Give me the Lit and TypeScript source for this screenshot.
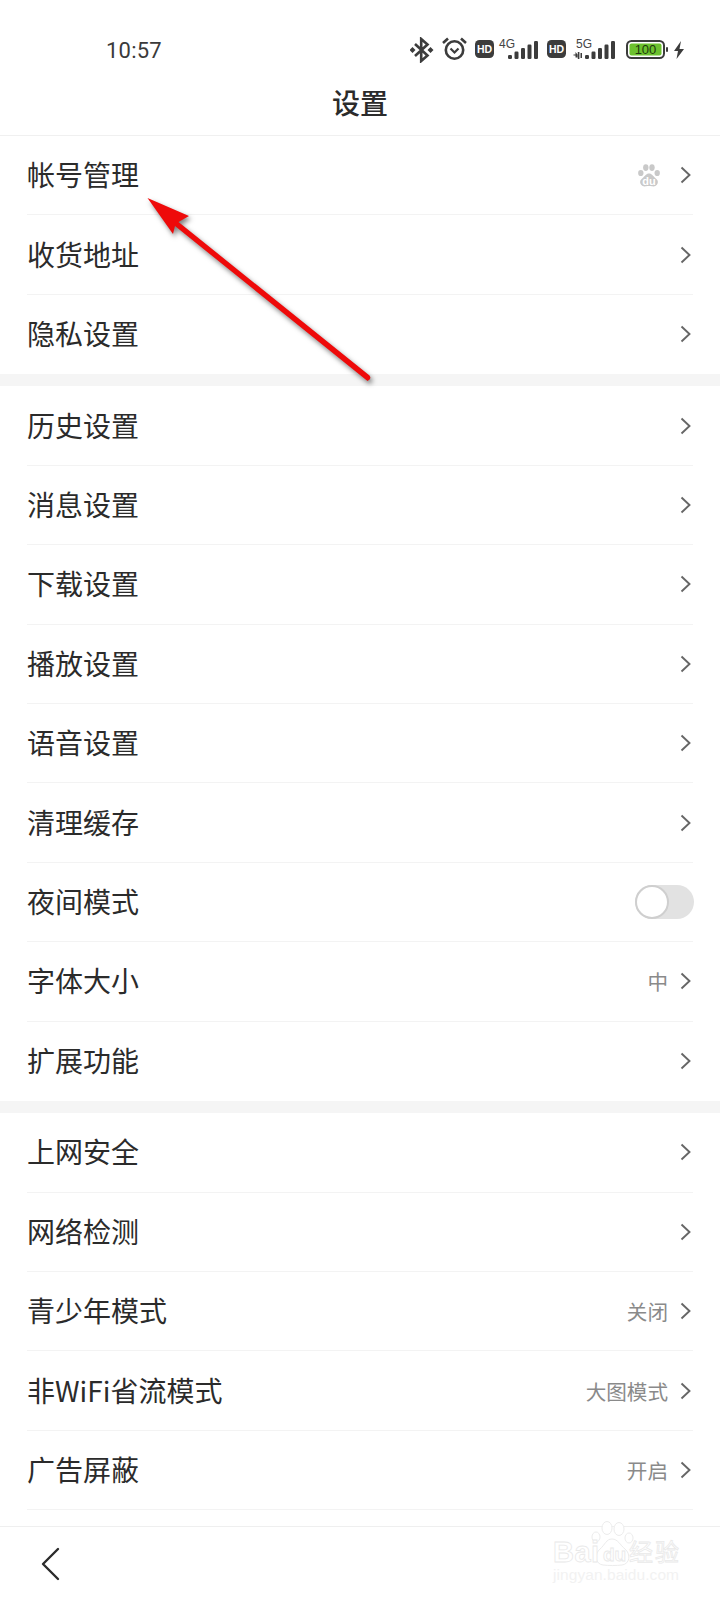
import { LitElement, html, css, svg } from "lit";
import { customElement } from "lit/decorators.js";

type Row = { t: string; v?: string; paw?: boolean; toggle?: boolean; line?: boolean };

const S1: Row[] = [{ t: "帐号管理", paw: true }, { t: "收货地址" }, { t: "隐私设置" }];
const S2: Row[] = [
  { t: "历史设置" }, { t: "消息设置" }, { t: "下载设置" }, { t: "播放设置" }, { t: "语音设置" },
  { t: "清理缓存" }, { t: "夜间模式", toggle: true }, { t: "字体大小", v: "中" }, { t: "扩展功能" },
];
const S3: Row[] = [
  { t: "上网安全" }, { t: "网络检测" }, { t: "青少年模式", v: "关闭" },
  { t: "非WiFi省流模式", v: "大图模式" }, { t: "广告屏蔽", v: "开启", line: true },
];

const signal = (x: number) => svg`
  <rect x="${x}" y="15" width="4" height="4" rx="1.2"/>
  <rect x="${x + 6.5}" y="11.5" width="4" height="7.5" rx="1.2"/>
  <rect x="${x + 13}" y="8" width="4" height="11" rx="1.2"/>
  <rect x="${x + 19.5}" y="4.5" width="4" height="14.5" rx="1.2"/>
  <rect x="${x + 26}" y="1" width="4" height="18" rx="1.2"/>`;

const hd = (x: number) => svg`
  <rect x="${x}" y="0" width="19" height="18" rx="4.5" fill="#3c3c3c"/>
  <text x="${x + 9.5}" y="13" text-anchor="middle" font-size="10.5" font-weight="700" fill="#fff" font-family="'Liberation Sans',sans-serif">HD</text>`;

@customElement("app-root")
export class AppRoot extends LitElement {
  static styles = css`
    :host {
      display: flex;
      flex-direction: column;
      position: relative;
      width: 720px;
      height: 1600px;
      overflow: hidden;
      background: #fff;
      color: #2b2b2b;
      font-family: "Noto Sans CJK SC", "Noto Sans", sans-serif;
    }
    .status {
      height: 75px;
      flex: none;
      display: flex;
      align-items: flex-start;
      justify-content: space-between;
      padding: 0 34px 0 106px;
      box-sizing: border-box;
    }
    .time {
      font-family: "Roboto", "Noto Sans", sans-serif;
      font-size: 22px;
      line-height: 26px;
      margin-top: 38px;
      letter-spacing: 0.2px;
      color: #3a3a3a;
    }
    .sicons { margin-top: 37px; display: block; }
    .nav {
      height: 61px;
      flex: none;
      box-sizing: border-box;
      border-bottom: 1px solid #f0f0f0;
      display: flex;
      align-items: center;
      justify-content: center;
      font-size: 28px;
      font-weight: 500;
      padding-bottom: 6px;
    }
    .list { flex: 1; min-height: 0; overflow: hidden; }
    .gap { height: 12.3px; background: #f5f5f5; }
    .row {
      height: 79.4px;
      margin: 0 27px;
      box-sizing: border-box;
      display: flex;
      align-items: center;
      border-bottom: 1px solid #f3f3f3;
    }
    .row.last { border-bottom: none; }
    .row.line { border-bottom: 1px solid #f3f3f3; }
    .title { flex: 1; font-size: 28px; line-height: 36px; margin-bottom: 2px; }
    .val { font-size: 20.6px; color: #8a8a8a; margin-right: 12px; }
    .chev { display: block; margin-right: 2px; }
    .paw { display: block; margin-right: 20px; }
    .toggle {
      width: 59px;
      height: 34px;
      margin-right: -1px;
      border-radius: 17px;
      background: #e2e2e2;
      position: relative;
      box-sizing: border-box;
    }
    .knob {
      position: absolute;
      left: 0;
      top: 0;
      width: 34px;
      height: 34px;
      border-radius: 50%;
      background: #fff;
      box-sizing: border-box;
      border: 2px solid #cfcfcf;
    }
    .bar {
      height: 74px;
      flex: none;
      box-sizing: border-box;
      border-top: 1px solid #efefef;
      padding: 20px 0 0 41px;
    }
    .bar svg { display: block; }
    .arrow {
      position: absolute;
      left: 0;
      top: 0;
      pointer-events: none;
      filter: drop-shadow(2px 3px 2.5px rgba(0, 0, 0, 0.5));
    }
    .wm {
      position: absolute;
      left: 552px;
      top: 1520px;
      width: 128px;
      height: 66px;
      font-family: "Liberation Sans", sans-serif;
      color: transparent;
    }
    .wm svg { position: absolute; left: 0; top: 0; }
  `;

  private chevron() {
    return html`<svg class="chev" width="11" height="18" viewBox="0 0 11 18">
      <path d="M1.5 1.5 L9.5 9 L1.5 16.5" fill="none" stroke="#666" stroke-width="1.9"/>
    </svg>`;
  }

  private paw() {
    return html`<svg class="paw" width="22" height="23" viewBox="0 0 22 23">
      <g fill="#c9c9c9">
        <ellipse cx="2.8" cy="9" rx="2.7" ry="3.1"/>
        <ellipse cx="7.8" cy="3.6" rx="2.7" ry="3.4"/>
        <ellipse cx="14" cy="3.6" rx="2.7" ry="3.4"/>
        <ellipse cx="19.2" cy="9" rx="2.7" ry="3.1"/>
        <path d="M11 9.5c3 0 4 2.6 6 4.2 2.6 2 3.4 3.6 2.6 5.8-.9 2.6-3.6 3.2-5.6 2.8-2-.3-4-.3-6 0-2 .4-4.7-.2-5.6-2.8-.8-2.2 0-3.8 2.6-5.8 2-1.6 3-4.2 6-4.2z"/>
      </g>
      <text x="11" y="20.5" text-anchor="middle" font-size="11" font-weight="700" fill="#fff" font-family="'Liberation Sans',sans-serif">du</text>
    </svg>`;
  }

  private row(r: Row, last: boolean) {
    return html`<div class="row ${last ? "last" : ""} ${r.line ? "line" : ""}">
      <div class="title">${r.t}</div>
      ${r.v ? html`<div class="val">${r.v}</div>` : ""}
      ${r.paw ? this.paw() : ""}
      ${r.toggle
        ? html`<div class="toggle"><div class="knob"></div></div>`
        : this.chevron()}
    </div>`;
  }

  private section(rows: Row[]) {
    return rows.map((r, i) => this.row(r, i === rows.length - 1));
  }

  render() {
    return html`
      <div class="status">
        <div class="time">10:57</div>
        <svg class="sicons" width="276" height="26" viewBox="0 0 276 26" fill="#3c3c3c">
          <g transform="translate(0,1)">
            <path d="M5 6 L17.5 17.5 L11.2 23 V1 L17.5 6.5 L5 18" fill="none" stroke="#3c3c3c" stroke-width="2.6"/>
            <path d="M-0.5 12 l3-3 3 3-3 3z M17.5 12 l3-3 3 3-3 3z"/>
          </g>
          <g transform="translate(32,0)" fill="none" stroke="#3c3c3c">
            <circle cx="12.5" cy="13" r="8.7" stroke-width="2.6"/>
            <path d="M8.5 11.5 L12.5 15.5 L16.5 11.5" stroke-width="2.2"/>
            <path d="M1 6 L6 1.5 M24 6 L19 1.5" stroke-width="2.6"/>
          </g>
          <g transform="translate(65,3)">${hd(0)}</g>
          <text x="89" y="11" font-size="12" fill="#444" font-family="'Liberation Sans',sans-serif">4G</text>
          <g transform="translate(0,3)">${signal(98)}</g>
          <g transform="translate(72,3)">${hd(65)}</g>
          <text x="166" y="11" font-size="12" fill="#444" font-family="'Liberation Sans',sans-serif">5G</text>
          <path d="M163.5 17.5h2v-2.5l2 2.500v3h-2v-2h-2z M167.800 15h1.600v7h-1.600z M170.500 16h1.500v5h-1.500z"/>
          <g transform="translate(0,3)">${signal(175)}</g>
          <g transform="translate(216,3)">
            <rect x="1" y="1" width="37" height="17" rx="4.500" fill="#fff" stroke="#3c3c3c" stroke-width="2"/>
            <rect x="3.500" y="3.500" width="32" height="12" rx="2" fill="#6cc12e"/>
            <text x="19.500" y="14" text-anchor="middle" font-size="13" fill="#1d3a0c" font-family="'Liberation Sans',sans-serif">100</text>
            <rect x="40" y="7" width="2" height="5" rx="1"/>
          </g>
          <path d="M271 4 L264 14 H268 L266.500 22 L274 12 H269.500 Z"/>
        </svg>
      </div>
      <div class="nav">设置</div>
      <div class="list">
        ${this.section(S1)}
        <div class="gap"></div>
        ${this.section(S2)}
        <div class="gap"></div>
        ${this.section(S3)}
      </div>
      <div class="bar">
        <svg width="20" height="34" viewBox="0 0 20 34">
          <path d="M17 2 L2 17 L17 32" fill="none" stroke="#2b2b2b" stroke-width="2.4" stroke-linecap="round" stroke-linejoin="round"/>
        </svg>
      </div>
      <svg class="arrow" width="720" height="500" viewBox="0 0 720 500">
        <path d="M147.500 198 L189 216 L178.500 222 L369.500 375.500 Q372 379 367.500 381 L175 226 L173 234 Z" fill="#ee0a0a"/>
      </svg>
      <div class="wm">
        <svg width="128" height="66" viewBox="0 0 128 66">
          <g fill="#fff" stroke="#ececec" stroke-width="1">
            <ellipse cx="44" cy="17" rx="4" ry="5"/>
            <ellipse cx="55" cy="8" rx="5" ry="6.500"/>
            <ellipse cx="67" cy="9" rx="5" ry="6.500"/>
            <ellipse cx="77" cy="18" rx="4" ry="5"/>
            <path d="M60 19c6 0 8 6 13 10 6 5 5 15-3 16-6 .7-13 .7-19 0-8-1-9-11-3-16 5-4 6-10 12-10z"/>
          </g>
          <g fill="#fff" stroke="#e9e9e9" stroke-width="0.8" font-family="'Liberation Sans',sans-serif">
            <text x="1" y="42" font-size="29" font-weight="700" textLength="46">Bai</text>
            <text x="51" y="41" font-size="19" font-weight="700">du</text>
            <text x="77" y="41" font-size="24" font-family="'Noto Sans CJK SC',sans-serif" textLength="50">经验</text>
          </g>
          <text x="1" y="60" font-size="15.500" fill="#f2f2f2" font-family="'Liberation Sans',sans-serif" textLength="126">jingyan.baidu.com</text>
        </svg>
      </div>
    `;
  }
}
